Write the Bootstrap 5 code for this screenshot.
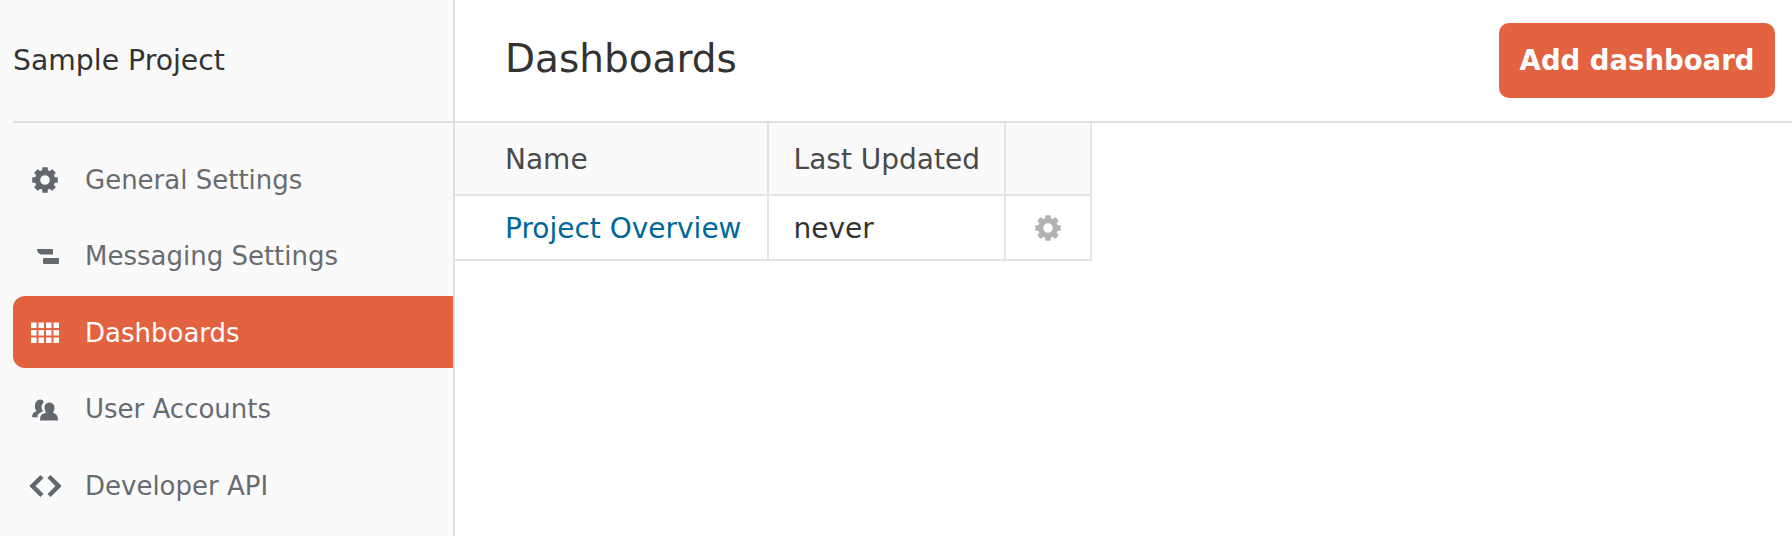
<!DOCTYPE html>
<html lang="en">
<head>
  <meta charset="UTF-8" />
  <meta name="viewport" content="width=device-width, initial-scale=1.0"/>
  <title>Dashboards - Sample Project</title>
  <link rel="stylesheet" href="https://cdn.jsdelivr.net/npm/bootstrap@5.3.0/dist/css/bootstrap.min.css">
  <style>
    html, body {
      height: 100%;
    }
    body {
      font-family: "DejaVu Sans", Verdana, sans-serif;
      color: #333;
      background-color: #fff;
      overflow: hidden;
    }
    .page-wrap {
      height: 536px;
    }
    .side-panel {
      width: 455px;
      flex: none;
      padding-left: 13px;
      background-color: #fafafa;
      border-right: 2px solid #e0e0e0;
    }
    .project-name {
      height: 123px;
      font-size: 28.3px;
      padding-top: 2px;
      border-bottom: 2px solid #e0e0e0;
    }
    .side-menu {
      padding-top: 20px;
      gap: 4.6px;
    }
    .side-link {
      height: 72px;
      padding-top: 2px;
      font-size: 26px;
      color: #686c70;
      text-decoration: none;
      border-radius: 12px 0 0 12px;
    }
    .side-link.is-active {
      background-color: #e36240;
      color: #fff;
    }
    .side-icon {
      width: 64px;
      margin-right: 8px;
      flex: none;
      display: flex;
      justify-content: center;
    }
    .side-icon svg {
      width: 32px;
      height: 32px;
      fill: #62686d;
      color: #62686d;
    }
    .is-active .side-icon svg {
      fill: #fff;
    }
    .top-bar {
      height: 123px;
      padding: 0 17px 0 50px;
      border-bottom: 2px solid #e0e0e0;
    }
    .top-bar h1 {
      font-size: 39px;
      font-weight: 400;
      margin: 0 0 2px;
    }
    .add-btn {
      background-color: #e36240;
      border: 0;
      border-radius: 10px;
      color: #fff;
      font-size: 27.5px;
      font-weight: 700;
      height: 75px;
      width: 276px;
      padding: 0;
    }
    .dash-table {
      border-collapse: collapse;
      font-size: 28px;
    }
    .dash-table th, .dash-table td {
      border: 2px solid #e4e4e4;
      padding: 2px 24px 0 25px;
      white-space: nowrap;
    }
    .dash-table tr > :first-child {
      border-left: 0;
      padding-left: 50px;
      padding-right: 25px;
    }
    .dash-table thead tr > * {
      border-top: 0;
    }
    .dash-table th {
      background-color: #fafafa;
      color: #4a4a4a;
      font-weight: 400;
      height: 72px;
    }
    .dash-table td {
      height: 65px;
    }
    .dash-table a {
      color: #00679a;
      text-decoration: none;
    }
    .dash-table .gear-cell {
      width: 86px;
      padding: 0;
    }
    .gear-cell svg {
      width: 32px;
      height: 32px;
      fill: #b3b3b3;
      color: #b3b3b3;
      display: block;
      margin: 0 auto;
    }
  </style>
</head>
<body>

  <svg width="0" height="0" class="d-none">
    <symbol id="gear" viewBox="-3 -3 30 30">
      <g transform="translate(12 12)">
        <circle r="7" fill="none" stroke="currentColor" stroke-width="5"/>
        <rect id="tooth" x="-2.600" y="-12" width="5.200" height="5" rx=".6"/>
        <use href="#tooth" transform="rotate(45)"/>
        <use href="#tooth" transform="rotate(90)"/>
        <use href="#tooth" transform="rotate(135)"/>
        <use href="#tooth" transform="rotate(180)"/>
        <use href="#tooth" transform="rotate(225)"/>
        <use href="#tooth" transform="rotate(270)"/>
        <use href="#tooth" transform="rotate(315)"/>
      </g>
    </symbol>
  </svg>

  <div class="page-wrap d-flex">

    <!-- Sidebar -->
    <aside class="side-panel">
      <div class="project-name d-flex align-items-center">Sample Project</div>
      <nav class="side-menu d-flex flex-column">
        <a href="#" class="side-link d-flex align-items-center">
          <span class="side-icon"><svg><use href="#gear"/></svg></span>General Settings
        </a>
        <a href="#" class="side-link d-flex align-items-center">
          <span class="side-icon"><svg viewBox="0 0 32 32"><path d="M8 8h15a1 1 0 0 1 1 1v4.500H13C10 13.500 8 11 8 8z"/><rect x="14" y="17" width="16" height="6" rx="1"/></svg></span>Messaging Settings
        </a>
        <a href="#" class="side-link is-active d-flex align-items-center">
          <span class="side-icon"><svg viewBox="0 0 32 32"><path d="M2 5.500h5.500V11H2zm7.500 0H15V11H9.500zm7.500 0h5.500V11H17zm7.500 0H30V11h-5.500zM2 13h5.500v5.500H2zm7.500 0H15v5.500H9.500zm7.500 0h5.500v5.500H17zm7.500 0H30v5.500h-5.500zM2 20.500h5.500V26H2zm7.500 0H15V26H9.500zm7.500 0h5.500V26H17zm7.500 0H30V26h-5.500z"/></svg></span>Dashboards
        </a>
        <a href="#" class="side-link d-flex align-items-center">
          <span class="side-icon"><svg viewBox="0 0 32 32"><path d="M11 5.500c2.200 0 3.600 1.300 3.800 3-1.600 1.200-2.500 3-2.200 5.300.2 1.500.8 2.600 1.500 3.400l-3.300 1.700C9 19.800 8.500 21 8.500 23.500L3 23c.2-2.500 1-4 2.800-5l1.800-1C6.700 16 6 14.500 6 12.500 6 8.500 8 5.500 11 5.500z"/><path d="M20.500 8.500c3 0 5 2.300 5 5.500 0 2-.7 3.500-1.800 4.500l2.800 1.500c1.700 1 2.500 3 2.500 6.500H11c0-3.500.8-5.500 2.500-6.500l3.800-1.500c-1.100-1-1.800-2.500-1.800-4.500 0-3.200 2-5.500 5-5.500z"/></svg></span>User Accounts
        </a>
        <a href="#" class="side-link d-flex align-items-center">
          <span class="side-icon"><svg viewBox="0 0 32 32"><path d="M13 6.500L3.500 16l9.500 9.500M20 6.500l9.500 9.500-9.500 9.500" fill="none" stroke="currentColor" stroke-width="4.500"/></svg></span>Developer API
        </a>
      </nav>
    </aside>

    <!-- Main -->
    <main class="flex-grow-1">
      <div class="top-bar d-flex align-items-center justify-content-between">
        <h1>Dashboards</h1>
        <button type="button" class="btn add-btn">Add dashboard</button>
      </div>
      <table class="dash-table">
        <thead>
          <tr>
            <th>Name</th>
            <th>Last Updated</th>
            <th class="gear-cell"></th>
          </tr>
        </thead>
        <tbody>
          <tr>
            <td><a href="#">Project Overview</a></td>
            <td>never</td>
            <td class="gear-cell"><svg><use href="#gear"/></svg></td>
          </tr>
        </tbody>
      </table>
    </main>
  </div>

  <script src="https://cdn.jsdelivr.net/npm/bootstrap@5.3.0/dist/js/bootstrap.bundle.min.js"></script>
</body>
</html>
